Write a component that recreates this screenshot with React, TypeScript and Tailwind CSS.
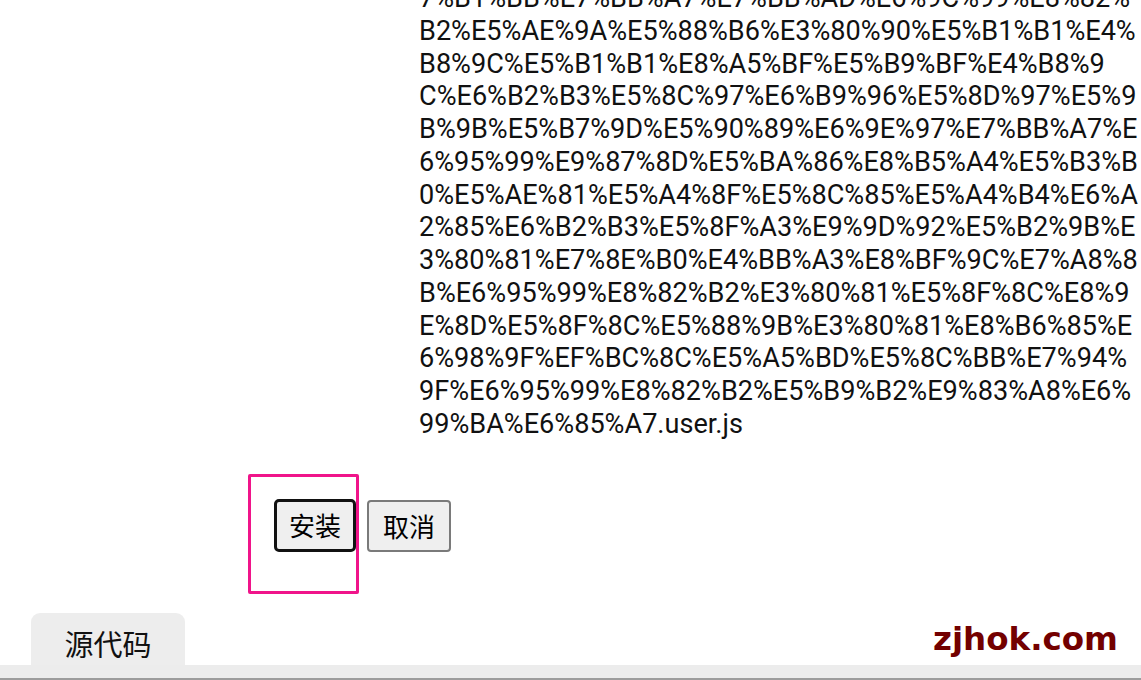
import React from 'react'

const lines = [
  '7%B1%BB%E7%BB%A7%E7%BB%AD%E6%9C%99%E8%82%',
  'B2%E5%AE%9A%E5%88%B6%E3%80%90%E5%B1%B1%E4%',
  'B8%9C%E5%B1%B1%E8%A5%BF%E5%B9%BF%E4%B8%9',
  'C%E6%B2%B3%E5%8C%97%E6%B9%96%E5%8D%97%E5%9',
  'B%9B%E5%B7%9D%E5%90%89%E6%9E%97%E7%BB%A7%E',
  '6%95%99%E9%87%8D%E5%BA%86%E8%B5%A4%E5%B3%B',
  '0%E5%AE%81%E5%A4%8F%E5%8C%85%E5%A4%B4%E6%A',
  '2%85%E6%B2%B3%E5%8F%A3%E9%9D%92%E5%B2%9B%E',
  '3%80%81%E7%8E%B0%E4%BB%A3%E8%BF%9C%E7%A8%8',
  'B%E6%95%99%E8%82%B2%E3%80%81%E5%8F%8C%E8%9',
  'E%8D%E5%8F%8C%E5%88%9B%E3%80%81%E8%B6%85%E',
  '6%98%9F%EF%BC%8C%E5%A5%BD%E5%8C%BB%E7%94%',
  '9F%E6%95%99%E8%82%B2%E5%B9%B2%E9%83%A8%E6%',
  '99%BA%E6%85%A7.user.js',
]

export default function App() {
  return (
    <div className="h-[680px] w-full overflow-hidden bg-white flex flex-col">
      {/* file name, wrapped */}
      <div className="-mt-[18px] pl-[419px] font-['Roboto',sans-serif] text-[27.1px] leading-[32.75px] text-[#111]">
        {lines.map((l, i) => (
          <div key={i} className="whitespace-nowrap">{l}</div>
        ))}
      </div>

      {/* buttons */}
      <div className="relative mt-[58px] flex items-start gap-[11px] pl-[274px] font-['Noto_Sans_CJK_SC',sans-serif] text-[26px] text-black">
        <button className="h-[53px] px-[12px] rounded-[5px] border-[3px] border-[#111] bg-[#efefef] leading-[30px]">
          安装
        </button>
        <button className="mt-[1px] h-[52px] px-[14px] rounded-[4px] border-2 border-[#7a7a7a] bg-[#efefef] leading-[30px]">
          取消
        </button>
        <div className="absolute left-[248px] top-[-25px] w-[111px] h-[120px] border-[3px] border-[#f0148a] rounded-[2px] pointer-events-none"></div>
      </div>

      {/* bottom tabs */}
      <div className="mt-auto">
        <div className="flex items-end justify-between pl-[31px] pr-[23px]">
          <div className="w-[154px] h-[52px] pt-[10px] rounded-t-[9px] bg-[#ededed] flex items-center justify-center font-['Noto_Sans_CJK_SC',sans-serif] text-[29px] text-[#111]">
            源代码
          </div>
          <div className="mb-[10px] font-['DejaVu_Sans',sans-serif] font-bold text-[32.5px] leading-none text-[#730000]">
            zjhok.com
          </div>
        </div>
        <div className="h-[13px] bg-[#ececec]"></div>
        <div className="h-[2px] bg-[#9c9c9c]"></div>
      </div>
    </div>
  )
}
